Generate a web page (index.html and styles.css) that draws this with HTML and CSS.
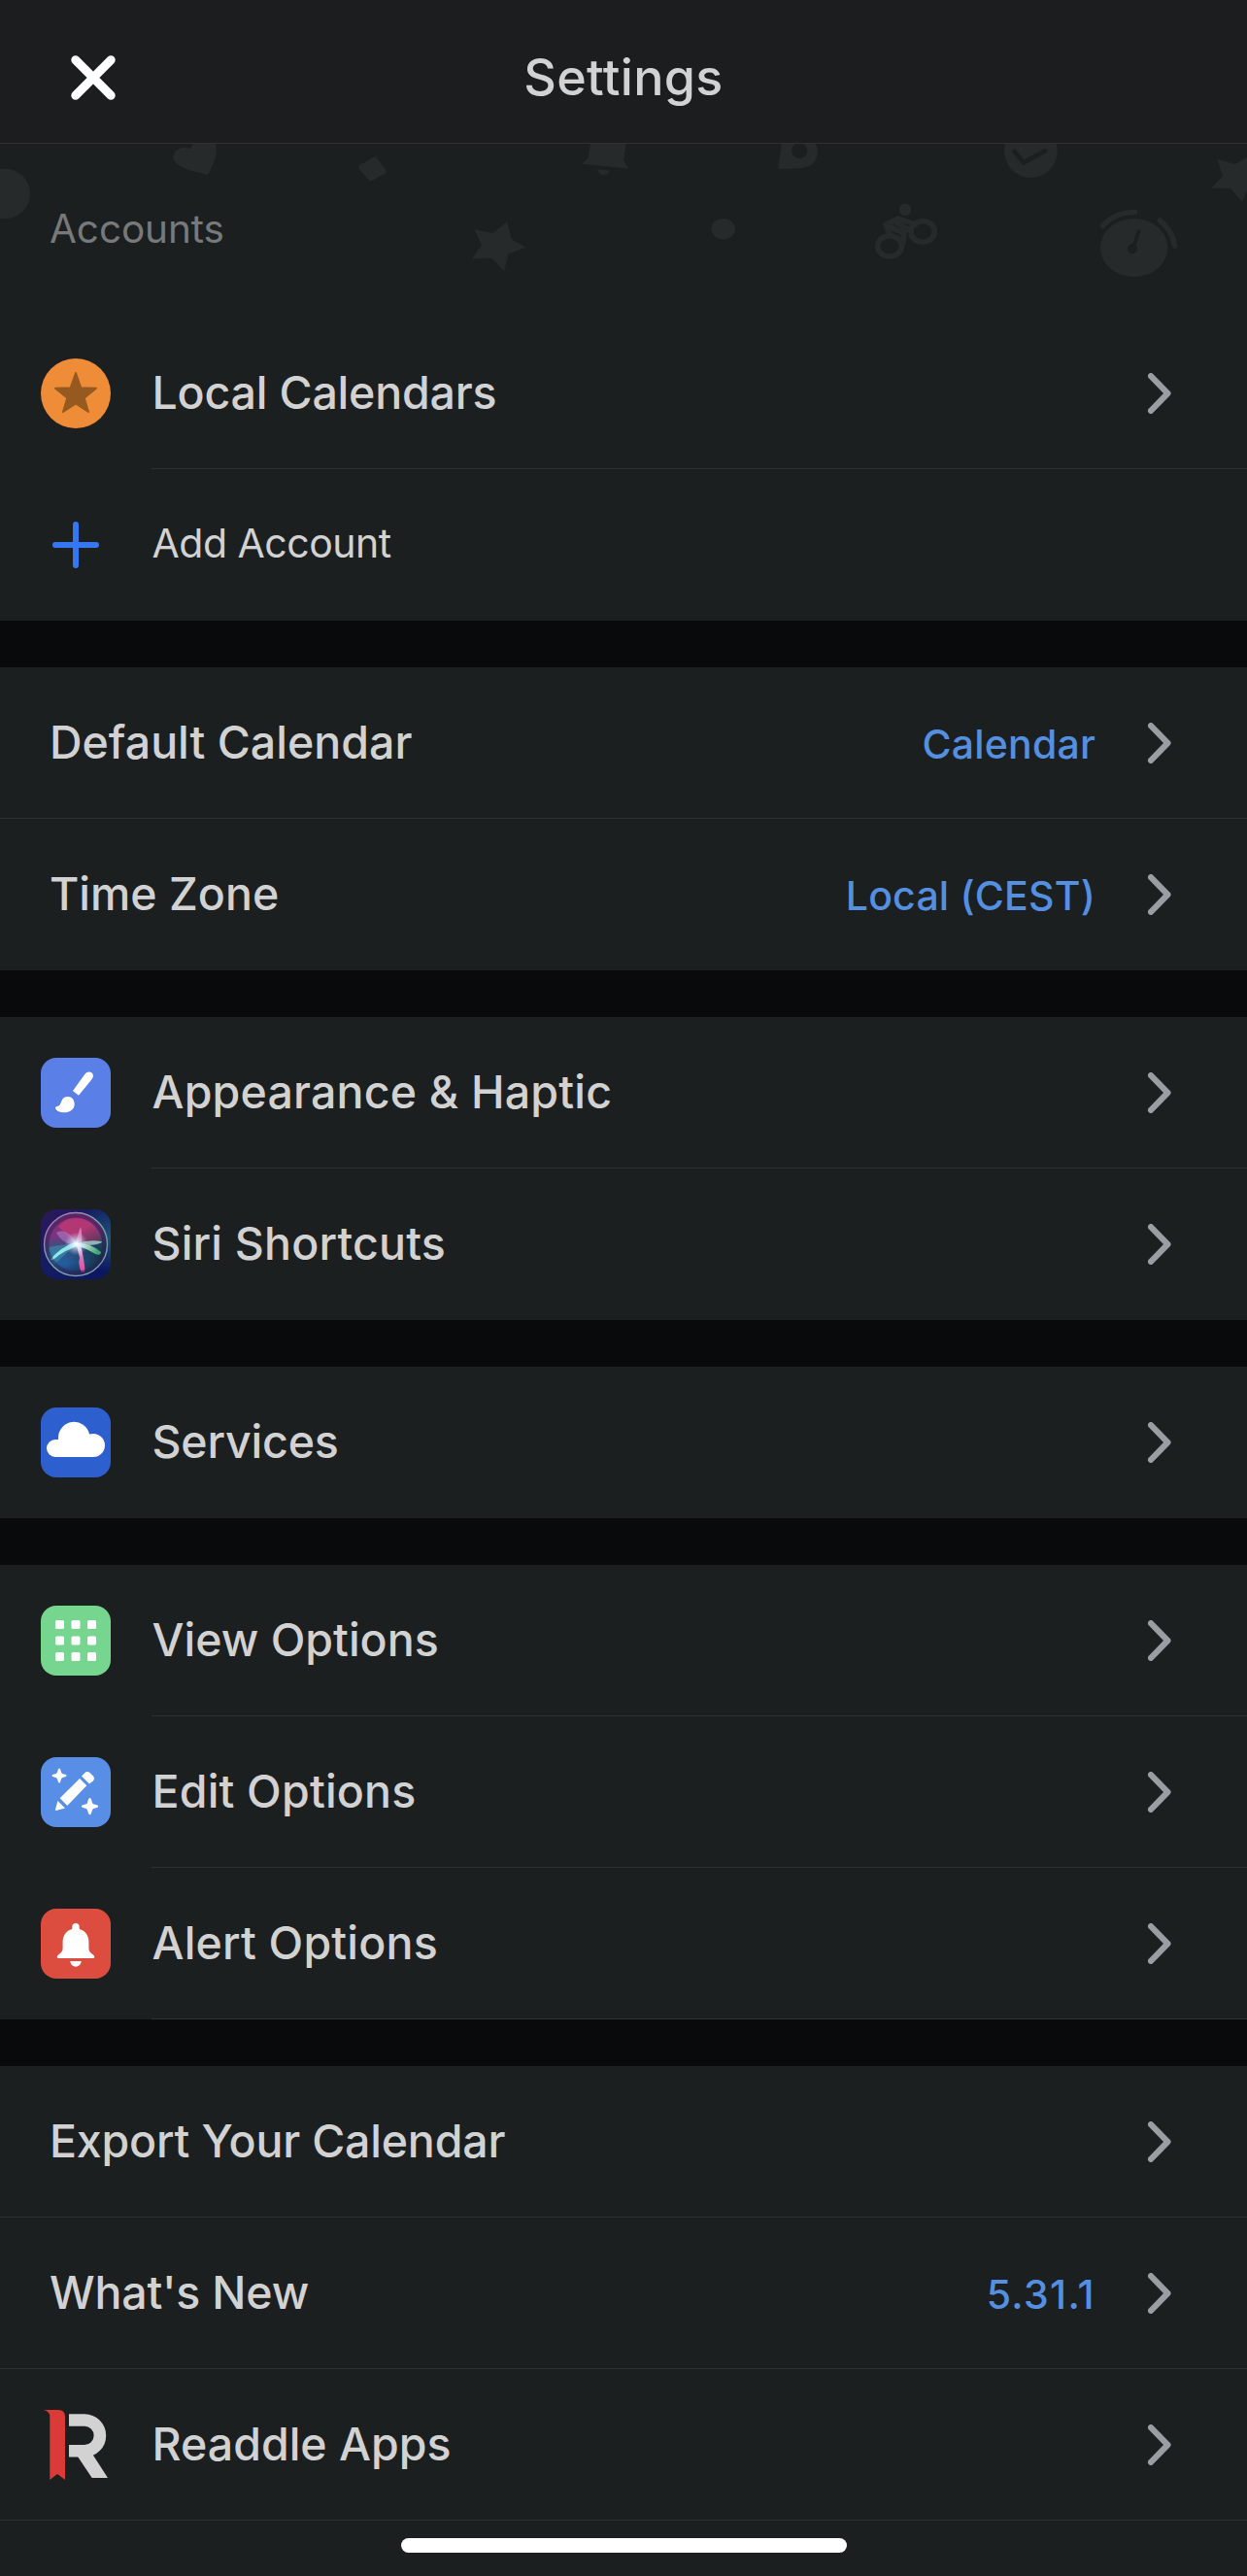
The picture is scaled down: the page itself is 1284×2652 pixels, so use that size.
FILE: index.html
```html
<!DOCTYPE html>
<html lang="en">
<head>
<meta charset="utf-8">
<title>Settings</title>
<link rel="stylesheet" href="styles.css">
</head>
<body>
<svg class="defs" width="0" height="0" aria-hidden="true">
  <symbol id="chevron" viewBox="0 0 24 42"><path d="M3 3.2 20.4 21 3 38.8" fill="none" stroke="#9a9da1" stroke-width="6.2" stroke-linecap="round" stroke-linejoin="round"/></symbol>
</svg>
<div class="screen">
  <header class="topbar">
    <button class="close" aria-label="Close">
      <svg viewBox="0 0 46 46"><path d="M4.8 4.8 41.2 41.2M41.2 4.8 4.8 41.2" stroke="#fff" stroke-width="9" stroke-linecap="round"/></svg>
    </button>
    <h1 class="title">Settings</h1>
  </header>

  <main class="groups">
    <section class="group">
      <div class="group-head">
        <svg class="doodles" viewBox="0 148 1284 179" aria-hidden="true">
          <g fill="#262a2b">
            <circle cx="5.3" cy="199.4" r="25.7"/>
            <path d="M214 180C200 177 178 172 178.4 162C179 153 188 150 196 153C198 150 199 148 199 146H221C225 155 222 166 214 180Z"/>
            <path d="M386 163.500 396 176.500 381.500 184.500 371 172.300Z" stroke="#262a2b" stroke-width="4" stroke-linejoin="round"/>
            <path d="M608 147 605.500 163 600 167.500Q599 169 602 169L647 173.700 642 165 645 147Z"/>
            <path d="M615.500 174 627.500 175.500C626 182 616.500 181.500 615.500 174Z"/>
            <path d="M522.400 228.300 526.500 246 541.500 254.700 523.500 261.500 519 279 506 265.500 485.700 266.700 496 252.300 488.600 236 507.300 240Z"/>
            <path d="M805 147 801 174 822 173.500C835 173 842 166 842 156Q842 151 839 147Z"/>
            <circle cx="1061.400" cy="155.600" r="27.400"/>
            <ellipse cx="744.700" cy="235.600" rx="12.300" ry="10.700"/>
            <path d="M1253 163.700 1271.700 169.300 1290 158 1286 182 1300 195 1285 194 1279 208 1267 194 1247.300 193.700 1259 181Z"/>
            <circle cx="932" cy="215.700" r="6.300"/>
            <ellipse cx="1167.700" cy="255" rx="34.700" ry="30"/>
          </g>
          <g fill="none" stroke="#262a2b" stroke-width="5.500" stroke-linecap="round" stroke-linejoin="round">
            <ellipse cx="950" cy="238.500" rx="12.300" ry="10.700"/>
            <ellipse cx="916" cy="253.400" rx="12.300" ry="10.700"/>
            <path d="M917 243 912 231.500 925 225 943 231"/>
            <path d="M914 232.500 931 240 929 252M922 228 938 238" stroke-width="6"/>
            <path d="M1135.700 232.500Q1148 218.500 1168.500 218.500"/>
            <path d="M1194.400 227Q1207 237 1209.600 253"/>
          </g>
          <g fill="#1c1f20" stroke="#1c1f20" stroke-linecap="round" stroke-linejoin="round">
            <circle cx="823.200" cy="155" r="8" stroke="none"/>
            <path d="M1044.500 156 1054 167.500 1076 155.300" fill="none" stroke-width="4.500"/>
            <path d="M1172.600 238 1166.500 256" stroke-width="3.500"/>
            <circle cx="1166" cy="256" r="5" stroke="none"/>
          </g>
        </svg>
        <h2 class="group-title">Accounts</h2>
      </div>
      <a class="row lined inset">
        <svg class="icon" viewBox="0 0 72 72"><circle cx="36" cy="36" r="36" fill="#ee8c37"/><path d="M36 15 41.300 30.300 57 30.800 44.700 40.700 49 55 36 46.500 23 55 27.300 40.700 15 30.800 30.700 30.300Z" fill="#965a20" stroke="#965a20" stroke-width="2" stroke-linejoin="round"/></svg>
        <span class="label tight">Local Calendars</span>
        <svg class="chevron"><use href="#chevron"/></svg>
      </a>
      <a class="row inset">
        <svg class="icon" viewBox="0 0 72 72"><path d="M36 15V57M15 36H57" stroke="#3577f2" stroke-width="6" stroke-linecap="round"/></svg>
        <span class="label light">Add Account</span>
      </a>
    </section>

    <section class="group">
      <a class="row lined"><span class="label">Default Calendar</span><span class="value">Calendar</span><svg class="chevron"><use href="#chevron"/></svg></a>
      <a class="row"><span class="label">Time Zone</span><span class="value">Local (CEST)</span><svg class="chevron"><use href="#chevron"/></svg></a>
    </section>

    <section class="group">
      <a class="row lined inset">
        <svg class="icon" viewBox="0 0 72 72"><rect width="72" height="72" rx="16" fill="#5a80e8"/><g fill="#fff"><path d="M33 34 45.300 17C50 11.500 56.500 16.500 52.800 21.800L39 38.700Z"/><path d="M28 40C32 40 34.700 43 34.700 48C34.700 53 30 56.300 24 56.300C19 56.300 15.500 54.500 15 51.500C15 50 17 50 18.500 49.500C21.500 48.500 20 40 28 40Z"/></g></svg>
        <span class="label wide">Appearance &amp; Haptic</span>
        <svg class="chevron"><use href="#chevron"/></svg>
      </a>
      <a class="row inset">
        <svg class="icon" viewBox="0 0 72 72">
          <defs>
            <linearGradient id="siri-back" x1="0" y1="0" x2="1" y2="1"><stop offset="0" stop-color="#2d1858"/><stop offset=".45" stop-color="#141c62"/><stop offset="1" stop-color="#0b1560"/></linearGradient>
            <radialGradient id="siri-side" cx="1" cy=".4" r=".5"><stop offset="0" stop-color="#1c5578"/><stop offset="1" stop-color="#1c5578" stop-opacity="0"/></radialGradient>
            <linearGradient id="siri-orb" x1=".35" y1="0" x2=".45" y2="1"><stop offset="0" stop-color="#8a2a78"/><stop offset=".35" stop-color="#79357f"/><stop offset=".55" stop-color="#33507f"/><stop offset=".8" stop-color="#245d9e"/><stop offset="1" stop-color="#1d2f60"/></linearGradient>
            <linearGradient id="siri-rim" x1="0" y1="0" x2="1" y2="1"><stop offset="0" stop-color="#a06fc0"/><stop offset=".5" stop-color="#7fa9a5"/><stop offset="1" stop-color="#7b96bd"/></linearGradient>
            <radialGradient id="siri-shade" cx=".95" cy=".75" r=".6"><stop offset="0" stop-color="#123040"/><stop offset="1" stop-color="#123040" stop-opacity="0"/></radialGradient>
            <radialGradient id="siri-glow"><stop offset="0" stop-color="#fff"/><stop offset=".3" stop-color="#e8f4ff" stop-opacity=".7"/><stop offset="1" stop-color="#b9c8ff" stop-opacity="0"/></radialGradient>
            <linearGradient id="siri-pink" x1="0" y1="0" x2="0" y2="1"><stop offset="0" stop-color="#fff"/><stop offset=".5" stop-color="#d873b8"/><stop offset="1" stop-color="#dc4c9c"/></linearGradient>
            <linearGradient id="siri-green" x1="0" y1="0" x2="1" y2=".3"><stop offset="0" stop-color="#fff"/><stop offset="1" stop-color="#3da676"/></linearGradient>
          </defs>
          <rect width="72" height="72" rx="16" fill="url(#siri-back)"/>
          <rect width="72" height="72" rx="16" fill="url(#siri-side)"/>
          <circle cx="36" cy="36" r="32.500" fill="url(#siri-orb)"/>
          <path d="M18 18C28 4 54 5 62 29Q64 34 50 34L36 35Z" fill="#c83a70" opacity=".7"/>
          <circle cx="36" cy="36" r="32.500" fill="url(#siri-shade)"/>
          <path d="M8 39Q20 36 36 36L14 57Q7 48 8 39Z" fill="#3f9fb8" opacity=".5"/>
          <path d="M16 24C24 19 34 27 37 36C29 38 20 32 16 24Z" fill="#bd89d2" opacity=".5"/>
          <path d="M36 35Q39 23 41 18Q43 25 42 36Z" fill="#ee8dcb" opacity=".75"/>
          <path d="M10 51.500Q20 39 37 33L41 37Q25 41 12 52.500Z" fill="#8ee8e5"/>
          <path d="M36.500 36 40.500 35Q45 52 45.500 64L42 65Q38 57 40 50Z" fill="url(#siri-pink)"/>
          <path d="M37 35Q50 31 63 33Q63 36 49 37L38 37Z" fill="#b9e7dd" opacity=".7"/>
          <path d="M38 35Q52 35 62 44Q62 48 56 46Q45 39 37 38Z" fill="url(#siri-green)"/>
          <circle cx="36.500" cy="35.500" r="12" fill="url(#siri-glow)"/>
          <circle cx="36" cy="36" r="32.500" fill="none" stroke="url(#siri-rim)" stroke-width="1.300"/>
          <circle cx="36" cy="36" r="29.500" fill="none" stroke="#301d50" stroke-width="4" opacity=".5"/>
        </svg>
        <span class="label wide">Siri Shortcuts</span>
        <svg class="chevron"><use href="#chevron"/></svg>
      </a>
    </section>

    <section class="group">
      <a class="row inset">
        <svg class="icon" viewBox="0 0 72 72"><rect width="72" height="72" rx="16" fill="#2e5fcf"/><path d="M15 51A9 9 0 0 1 15 33H18V31.300A16.200 16.200 0 0 1 50 27.500Q52 27 54 27A12 12 0 0 1 54 51Z" fill="#fff"/></svg>
        <span class="label tight">Services</span>
        <svg class="chevron"><use href="#chevron"/></svg>
      </a>
    </section>

    <section class="group">
      <a class="row lined inset">
        <svg class="icon" viewBox="0 0 72 72"><rect width="72" height="72" rx="16" fill="#76d58e"/><g fill="#fff"><rect x="15" y="15" width="9" height="9" rx="1.500"/><rect x="31.500" y="15" width="9" height="9" rx="1.500"/><rect x="48" y="15" width="9" height="9" rx="1.500"/><rect x="15" y="31.500" width="9" height="9" rx="1.500"/><rect x="31.500" y="31.500" width="9" height="9" rx="1.500"/><rect x="48" y="31.500" width="9" height="9" rx="1.500"/><rect x="15" y="48" width="9" height="9" rx="1.500"/><rect x="31.500" y="48" width="9" height="9" rx="1.500"/><rect x="48" y="48" width="9" height="9" rx="1.500"/></g></svg>
        <span class="label">View Options</span>
        <svg class="chevron"><use href="#chevron"/></svg>
      </a>
      <a class="row lined inset">
        <svg class="icon" viewBox="0 0 72 72"><rect width="72" height="72" rx="16" fill="#588ee6"/><g fill="#fff"><path d="M40 22 47.300 29.300 27.300 50 19.700 42.300Z"/><path d="M42 19.500 45.500 16Q48 14 50.500 16L54 19.500Q56 22 54 24.200L50 27.500Z"/><path d="M17.500 45 25 52.500 15.800 55Q14.700 55 15 53.800Z"/><path d="M19 11.500Q20 11.500 20.300 13C21.500 17 21 16.700 25 17.800Q26.500 18 26.500 19T25 20.200C21 21.500 21.500 21 20.300 25Q20 26.500 19 26.500T17.700 25C16.500 21 17 21.500 13 20.200Q11.500 20 11.500 19T13 17.800C17 16.700 16.500 17 17.700 13Q18 11.500 19 11.500Z"/><path d="M50.500 42Q51.700 42 52.200 44C53.500 48.700 53 48 57.500 49.200Q59.200 49.500 59.200 50.600T57.500 52C53 53.200 53.500 52.800 52.200 57.300Q51.700 59.300 50.500 59.300T48.800 57.300C47.500 52.800 48 53.200 43.500 52Q41.800 51.700 41.800 50.600T43.500 49.200C48 48 47.500 48.700 48.800 44Q49.300 42 50.500 42Z"/></g></svg>
        <span class="label wide">Edit Options</span>
        <svg class="chevron"><use href="#chevron"/></svg>
      </a>
      <a class="row lined inset">
        <svg class="icon" viewBox="0 0 72 72"><rect width="72" height="72" rx="16" fill="#dd4d3f"/><g fill="#fff"><path d="M32.300 21V18.700A3.700 3.700 0 0 1 39.700 18.700V21C46 22.500 49.400 28 49.400 34V41Q49.500 44.500 54 47.500Q55.500 48.700 55.300 50Q55 51 54 51H18Q17 51 16.700 50Q16.500 48.700 18 47.500Q22.500 44.500 22.600 41V34C22.600 28 26 22.500 32.300 21Z"/><path d="M30.300 54H41.700C41 61.500 31 61.500 30.300 54Z"/></g></svg>
        <span class="label wide">Alert Options</span>
        <svg class="chevron"><use href="#chevron"/></svg>
      </a>
    </section>

    <section class="group">
      <a class="row lined"><span class="label tight">Export Your Calendar</span><svg class="chevron"><use href="#chevron"/></svg></a>
      <a class="row lined"><span class="label tight">What's New</span><span class="value version">5.31.1</span><svg class="chevron"><use href="#chevron"/></svg></a>
      <a class="row lined">
        <svg class="icon logo" viewBox="0 0 72 72"><path d="M3 0H18Q25 0 25 7V72L17 66 9.300 72V7Q9.300 1.500 3 0Z" fill="#dc3a36"/><g fill="#d2d2d3"><path d="M29 10.500H45A15.900 15.900 0 0 1 45 42.300H29" fill="none" stroke="#d2d2d3" stroke-width="12.600"/><path d="M38 48 52.700 70H69L53.500 46Z"/></g></svg>
        <span class="label">Readdle Apps</span>
        <svg class="chevron"><use href="#chevron"/></svg>
      </a>
      <footer class="bottom"><div class="home-indicator"></div></footer>
    </section>
  </main>
</div>
</body>
</html>
```
FILE: styles.css
```css
* {
  box-sizing: border-box;
  margin: 0;
}

body {
  background: #090a0c;
  color: #d2d2d3;
  font-family: Inter, "Liberation Sans", sans-serif;
}

.defs {
  display: none;
}

.screen {
  width: 1284px;
  min-height: 2652px;
}

.topbar {
  display: grid;
  grid-template-columns: 200px 1fr 200px;
  align-items: center;
  height: 148px;
  padding-top: 13px;
  background: #1c1d1f;
  border-bottom: 1px solid #2f3233;
}

.close {
  width: 46px;
  height: 46px;
  margin-left: 73px;
  padding: 0;
  border: 0;
  background: none;
}

.close svg {
  display: block;
}

.title {
  text-align: center;
  font-size: 52px;
  font-weight: 500;
  line-height: 64px;
  letter-spacing: 0.33px;
}

.groups {
  display: flex;
  flex-direction: column;
  gap: 48px;
}

.group {
  background: #1c1f20;
}

.group-head {
  position: relative;
  height: 179px;
  padding: 63px 51px 0;
}

.doodles {
  position: absolute;
  inset: 0;
  width: 1284px;
  height: 179px;
}

.group-title {
  position: relative;
  font-size: 40.5px;
  font-weight: 400;
  line-height: 50px;
  letter-spacing: -0.1px;
  color: #77797a;
}

.row {
  display: flex;
  align-items: center;
  height: 156px;
  padding: 0 78px 0 51px;
  background: linear-gradient(#2f3233, #2f3233) no-repeat 0 155px / 0 1px;
}

.row.inset {
  padding-left: 42px;
}

.row.lined {
  background-size: 1284px 1px;
}

.row.lined.inset {
  background-position: 156px 155px;
}

.icon {
  flex: none;
  width: 72px;
  height: 72px;
  margin-right: 42.5px;
}

.logo {
  margin-left: -9px;
}

.label {
  flex: 1;
  padding-bottom: 2px;
  font-size: 46.5px;
  font-weight: 500;
  line-height: 58px;
  letter-spacing: 0;
  white-space: nowrap;
}

.label.tight {
  letter-spacing: -0.2px;
}

.label.wide {
  letter-spacing: 0.18px;
}

.label.light {
  padding-bottom: 4px;
  font-size: 41px;
  font-weight: 400;
  letter-spacing: -0.5px;
}

.value {
  padding-top: 2px;
  margin-right: 54px;
  font-size: 41px;
  font-weight: 500;
  line-height: 50px;
  letter-spacing: 0.2px;
  color: #548fe0;
}

.value.version {
  letter-spacing: 1.35px;
}

.chevron {
  flex: none;
  width: 24px;
  height: 42px;
}

.bottom {
  display: flex;
  justify-content: center;
  height: 57px;
  padding-top: 18px;
}

.home-indicator {
  width: 459px;
  height: 15px;
  border-radius: 8px;
  background: #fff;
}
```
